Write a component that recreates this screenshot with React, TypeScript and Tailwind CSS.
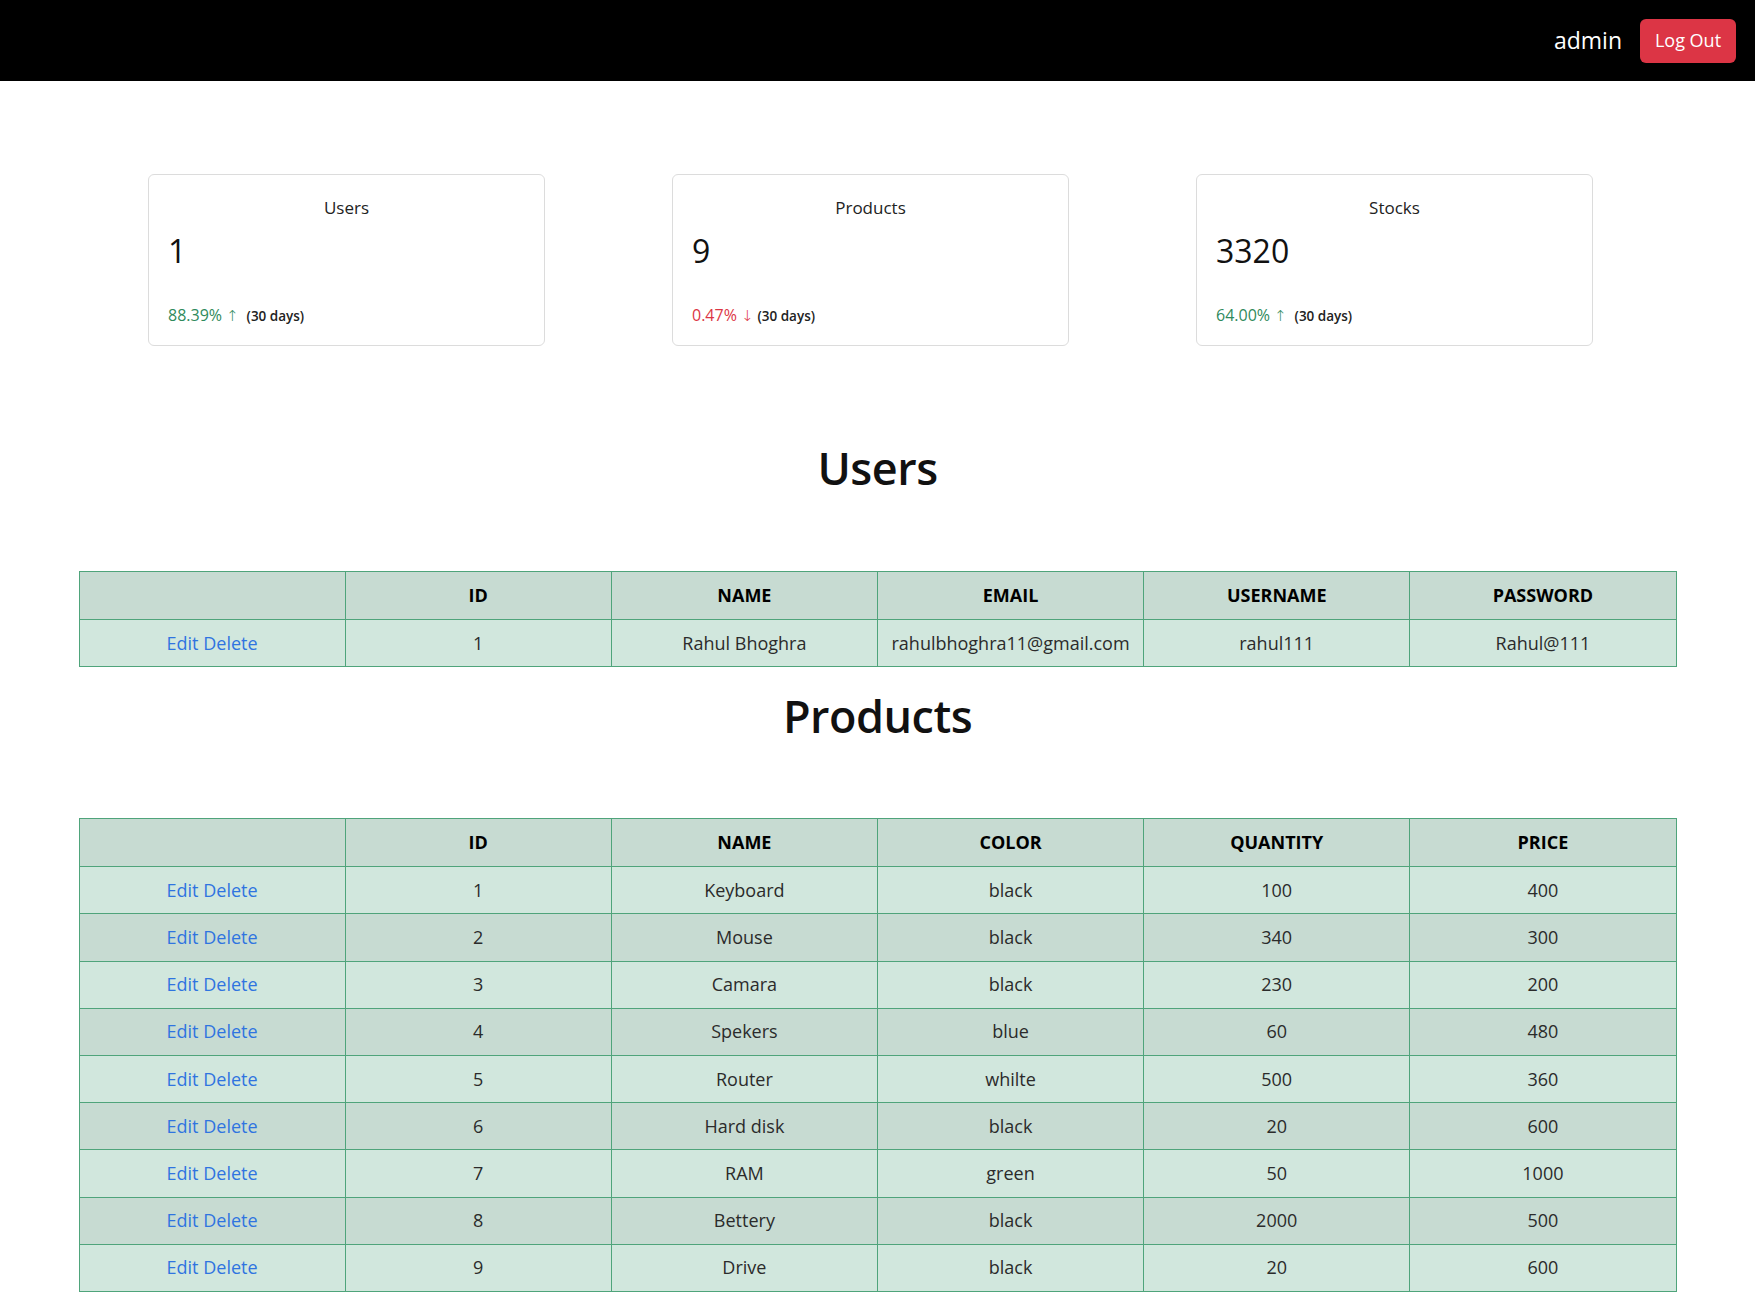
type Stat = { title: string; value: string; change: string; up: boolean }

const stats: Stat[] = [
  { title: 'Users', value: '1', change: '88.39%', up: true },
  { title: 'Products', value: '9', change: '0.47%', up: false },
  { title: 'Stocks', value: '3320', change: '64.00%', up: true },
]

const users = [
  { id: 1, name: 'Rahul Bhoghra', email: 'rahulbhoghra11@gmail.com', username: 'rahul111', password: 'Rahul@111' },
]

const products = [
  { id: 1, name: 'Keyboard', color: 'black', quantity: 100, price: 400 },
  { id: 2, name: 'Mouse', color: 'black', quantity: 340, price: 300 },
  { id: 3, name: 'Camara', color: 'black', quantity: 230, price: 200 },
  { id: 4, name: 'Spekers', color: 'blue', quantity: 60, price: 480 },
  { id: 5, name: 'Router', color: 'whilte', quantity: 500, price: 360 },
  { id: 6, name: 'Hard disk', color: 'black', quantity: 20, price: 600 },
  { id: 7, name: 'RAM', color: 'green', quantity: 50, price: 1000 },
  { id: 8, name: 'Bettery', color: 'black', quantity: 2000, price: 500 },
  { id: 9, name: 'Drive', color: 'black', quantity: 20, price: 600 },
]

function StatCard({ s }: { s: Stat }) {
  return (
    <div className="w-[397px] h-[172px] border border-[#dcdcdc] rounded-[6px] bg-white pt-[21px] px-[19px]">
      <div className="text-center text-[17px] leading-[24px] text-[#222]">{s.title}</div>
      <div className="mt-[11px] text-[32px] leading-[40px] text-[#111]">{s.value}</div>
      <div className="mt-[32px] flex items-center text-[16px] leading-[24px]">
        <span className={s.up ? 'text-[#2f8a5c]' : 'text-[#dc3545]'}>
          {s.change}
          <span className="ml-[4px] font-['DejaVu_Sans',sans-serif] font-light text-[15px]">{s.up ? '↑' : '↓'}</span>
        </span>
        <span className={`${s.up ? 'ml-[8px]' : 'ml-[4px]'} text-[13.5px] font-semibold text-[#222]`}>(30 days)</span>
      </div>
    </div>
  )
}

function Actions() {
  return (
    <span className="text-[#2f74e0]">
      <a className="cursor-pointer">Edit</a> <a className="cursor-pointer">Delete</a>
    </span>
  )
}

function DataTable({ cols, rows }: { cols: string[]; rows: (string | number)[][] }) {
  const cell = 'border border-[#4fa47b] text-center p-0'
  return (
    <table className="w-[1598px] mx-auto border-collapse table-fixed text-[18px]">
      <thead>
        <tr className="bg-[#c7dbd2]">
          <th className={`${cell} h-[48px]`}></th>
          {cols.map(c => (
            <th key={c} className={`${cell} h-[48px] font-bold text-black`}>{c}</th>
          ))}
        </tr>
      </thead>
      <tbody>
        {rows.map((r, i) => (
          <tr key={i} className={i % 2 === 0 ? 'bg-[#d1e7dd]' : 'bg-[#c7dbd2]'}>
            <td className={`${cell} h-[47.2px]`}><Actions /></td>
            {r.map((v, j) => (
              <td key={j} className={`${cell} h-[47.2px] text-[#2b2b2b]`}>{v}</td>
            ))}
          </tr>
        ))}
      </tbody>
    </table>
  )
}

export default function App() {
  return (
    <div className="min-h-screen bg-white font-['Open_Sans','Noto_Sans',sans-serif] pb-[19px]">
      {/* Navbar */}
      <nav className="h-[81px] bg-black flex items-center justify-end pr-[19px]">
        <span className="text-white text-[23px] mr-[18px]">admin</span>
        <button className="w-[96px] h-[44px] rounded-[6px] bg-[#dc3545] text-white text-[18px]">Log Out</button>
      </nav>

      {/* Stat cards */}
      <div className="mt-[93px] flex pl-[148px] gap-[127px]">
        {stats.map(s => <StatCard key={s.title} s={s} />)}
      </div>

      <h1 className="mt-[94px] text-center text-[45px] leading-[55px] font-semibold tracking-[-0.5px] text-[#111]">Users</h1>
      <div className="mt-[76px]">
        <DataTable
          cols={['ID', 'NAME', 'EMAIL', 'USERNAME', 'PASSWORD']}
          rows={users.map(u => [u.id, u.name, u.email, u.username, u.password])}
        />
      </div>

      <h1 className="mt-[21px] text-center text-[45px] leading-[55px] font-semibold tracking-[-0.5px] text-[#111]">Products</h1>
      <div className="mt-[75px]">
        <DataTable
          cols={['ID', 'NAME', 'COLOR', 'QUANTITY', 'PRICE']}
          rows={products.map(p => [p.id, p.name, p.color, p.quantity, p.price])}
        />
      </div>
    </div>
  )
}
